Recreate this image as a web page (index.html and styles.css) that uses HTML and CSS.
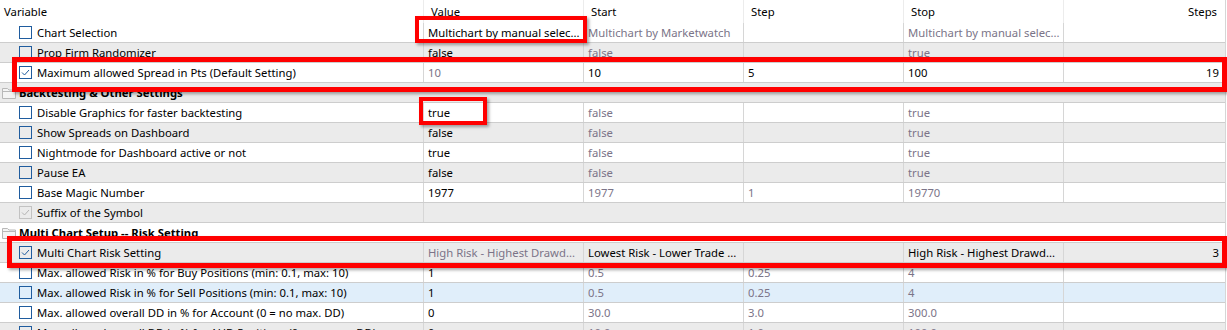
FILE: index.html
```html
<!DOCTYPE html>
<html lang="en">
<head>
    <meta charset="UTF-8">
    <title>Inputs</title>
    <link rel="stylesheet" href="styles.css">
</head>
<body>
    <div class="page">
        <div class="grid">
            <!-- Column headers -->
            <div class="row head">
                <div class="cell first">Variable</div>
                <div class="cell">Value</div>
                <div class="cell">Start</div>
                <div class="cell">Step</div>
                <div class="cell">Stop</div>
                <div class="cell num">Steps</div>
            </div>

            <div class="row">
                <div class="cell first"><span class="cb"></span>Chart Selection</div>
                <div class="cell">Multichart by manual selec...</div>
                <div class="cell dim">Multichart by Marketwatch</div>
                <div class="cell"></div>
                <div class="cell dim">Multichart by manual selec...</div>
                <div class="cell"></div>
            </div>
            <div class="row alt">
                <div class="cell first"><span class="cb"></span>Prop Firm Randomizer</div>
                <div class="cell">false</div>
                <div class="cell dim">false</div>
                <div class="cell"></div>
                <div class="cell dim">true</div>
                <div class="cell"></div>
            </div>
            <div class="row">
                <div class="cell first"><span class="cb on"><svg viewBox="0 0 11 11"><polyline points="2,5.5 4.5,8 9,3"/></svg></span>Maximum allowed Spread in Pts (Default Setting)</div>
                <div class="cell dim">10</div>
                <div class="cell">10</div>
                <div class="cell">5</div>
                <div class="cell">100</div>
                <div class="cell num">19</div>
            </div>

            <div class="row alt group">
                <svg class="folder" viewBox="0 0 16 15"><path d="M1.5 3.5h5l1.5 1.5h6.5v8.5h-13z"/><path d="M1.5 6.5h13"/></svg>
                <span>Backtesting &amp; Other Settings</span>
            </div>

            <div class="row">
                <div class="cell first"><span class="cb"></span>Disable Graphics for faster backtesting</div>
                <div class="cell">true</div>
                <div class="cell dim">false</div>
                <div class="cell"></div>
                <div class="cell dim">true</div>
                <div class="cell"></div>
            </div>
            <div class="row alt">
                <div class="cell first"><span class="cb"></span>Show Spreads on Dashboard</div>
                <div class="cell">false</div>
                <div class="cell dim">false</div>
                <div class="cell"></div>
                <div class="cell dim">true</div>
                <div class="cell"></div>
            </div>
            <div class="row">
                <div class="cell first"><span class="cb"></span>Nightmode for Dashboard active or not</div>
                <div class="cell">true</div>
                <div class="cell dim">false</div>
                <div class="cell"></div>
                <div class="cell dim">true</div>
                <div class="cell"></div>
            </div>
            <div class="row alt">
                <div class="cell first"><span class="cb"></span>Pause EA</div>
                <div class="cell">false</div>
                <div class="cell dim">false</div>
                <div class="cell"></div>
                <div class="cell dim">true</div>
                <div class="cell"></div>
            </div>
            <div class="row">
                <div class="cell first"><span class="cb"></span>Base Magic Number</div>
                <div class="cell">1977</div>
                <div class="cell dim">1977</div>
                <div class="cell dim">1</div>
                <div class="cell dim">19770</div>
                <div class="cell"></div>
            </div>
            <div class="row alt">
                <div class="cell first"><span class="cb off"><svg viewBox="0 0 11 11"><polyline points="2,5.5 4.5,8 9,3"/></svg></span>Suffix of the Symbol</div>
                <div class="cell wide"></div>
            </div>

            <div class="row group">
                <svg class="folder" viewBox="0 0 16 15"><path d="M1.5 3.5h5l1.5 1.5h6.5v8.5h-13z"/><path d="M1.5 6.5h13"/></svg>
                <span>Multi Chart Setup -- Risk Setting</span>
            </div>

            <div class="row alt">
                <div class="cell first"><span class="cb on"><svg viewBox="0 0 11 11"><polyline points="2,5.5 4.5,8 9,3"/></svg></span>Multi Chart Risk Setting</div>
                <div class="cell dim">High Risk - Highest Drawd...</div>
                <div class="cell">Lowest Risk - Lower Trade ...</div>
                <div class="cell"></div>
                <div class="cell">High Risk - Highest Drawd...</div>
                <div class="cell num">3</div>
            </div>
            <div class="row">
                <div class="cell first"><span class="cb"></span>Max. allowed Risk in % for Buy Positions (min: 0.1, max: 10)</div>
                <div class="cell">1</div>
                <div class="cell dim">0.5</div>
                <div class="cell dim">0.25</div>
                <div class="cell dim">4</div>
                <div class="cell"></div>
            </div>
            <div class="row hover">
                <div class="cell first"><span class="cb"></span>Max. allowed Risk in % for Sell Positions (min: 0.1, max: 10)</div>
                <div class="cell">1</div>
                <div class="cell dim">0.5</div>
                <div class="cell dim">0.25</div>
                <div class="cell dim">4</div>
                <div class="cell"></div>
            </div>
            <div class="row">
                <div class="cell first"><span class="cb"></span>Max. allowed overall DD in % for Account (0 = no max. DD)</div>
                <div class="cell">0</div>
                <div class="cell dim">30.0</div>
                <div class="cell dim">3.0</div>
                <div class="cell dim">300.0</div>
                <div class="cell"></div>
            </div>
            <div class="row alt">
                <div class="cell first"><span class="cb"></span>Max. allowed overall DD in % for AUD Positions (0 = no max. DD)</div>
                <div class="cell">0</div>
                <div class="cell dim">10.0</div>
                <div class="cell dim">1.0</div>
                <div class="cell dim">100.0</div>
                <div class="cell"></div>
            </div>
        </div>

        <!-- red annotation frames drawn over the table -->
        <div class="mark mark-value"></div>
        <div class="mark mark-spread"></div>
        <div class="mark mark-true"></div>
        <div class="mark mark-risk"></div>
    </div>
</body>
</html>
```

FILE: styles.css
```css
* {
    box-sizing: border-box;
}
body {
    margin: 0;
    background: #fff;
    font-family: 'Noto Sans', 'Liberation Sans', sans-serif;
    font-size: 11.3px;
    color: #000;
    overflow: hidden;
}
.page {
    position: relative;
    width: 1227px;
    height: 330px;
    overflow: hidden;
}
.grid {
    width: 1226px;
    border-right: 1px solid #d6d6d6;
}
.row {
    display: grid;
    grid-template-columns: 424px 160px 160px 160px 160px 161px;
    height: 20px;
    border-bottom: 1px solid #cdcdcd;
    background: #fff;
}
.row.alt {
    background: #ebebeb;
}
.row.hover {
    background: #e0eefa;
}
.row.head {
    height: 23px;
    border-bottom: none;
}
.cell {
    border-right: 1px solid #d6d6d6;
    padding: 0 4px;
    line-height: 19px;
    white-space: nowrap;
    overflow: hidden;
}
.cell:last-child {
    border-right: none;
}
.cell.first {
    display: flex;
    align-items: center;
    padding-left: 19px;
}
.cell.num {
    text-align: right;
    padding-right: 6px;
}
.cell.wide {
    grid-column: span 5;
}
.head .cell {
    line-height: 23px;
    padding-left: 7px;
    border-right-color: #ececec;
}
.head .cell.first {
    padding-left: 4px;
}
.head .cell.num {
    padding-right: 8px;
}
.dim {
    color: #7b7488;
}
.cb {
    width: 13px;
    height: 13px;
    border: 1px solid #1f5c9e;
    margin-right: 5px;
    flex-shrink: 0;
    display: flex;
}
.cb svg {
    width: 11px;
    height: 11px;
}
.cb polyline {
    fill: none;
    stroke: #1f5c9e;
    stroke-width: 1;
}
.cb.off {
    border-color: #c2c2c2;
}
.cb.off polyline {
    stroke: #b4b4b4;
}
.group {
    display: flex;
    align-items: center;
    font-weight: bold;
}
.folder {
    width: 16px;
    height: 15px;
    margin: 0 2px 0 1px;
}
.folder path {
    fill: #f4f4f4;
    stroke: #b8b8b8;
    stroke-width: 1;
}
.mark {
    position: absolute;
    border: 4px solid #ff0000;
    box-shadow: 2px 2px 3px rgba(0, 0, 0, 0.35);
}
.mark-value {
    left: 415px;
    top: 16px;
    width: 172px;
    height: 27px;
}
.mark-spread {
    left: 12px;
    top: 57px;
    width: 1215px;
    height: 35px;
    border-width: 5px;
}
.mark-true {
    left: 419px;
    top: 97px;
    width: 68px;
    height: 28px;
}
.mark-risk {
    left: 7px;
    top: 236px;
    width: 1220px;
    height: 32px;
    border-width: 5px;
}
```
